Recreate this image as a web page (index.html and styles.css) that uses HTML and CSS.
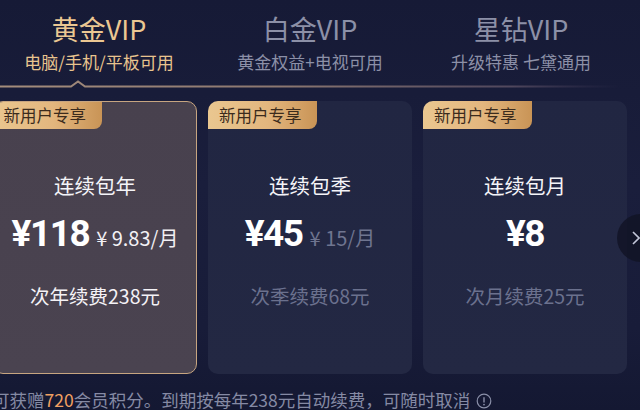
FILE: index.html
```html
<!DOCTYPE html>
<html lang="zh-CN">
<head>
<meta charset="utf-8">
<title>VIP</title>
<link rel="stylesheet" href="styles.css">
</head>
<body>
<div class="page">
  <div class="tabs">
    <div class="tab active">
      <div class="tab-title">黄金VIP</div>
      <div class="tab-sub">电脑/手机/平板可用</div>
    </div>
    <div class="tab">
      <div class="tab-title">白金VIP</div>
      <div class="tab-sub">黄金权益+电视可用</div>
    </div>
    <div class="tab">
      <div class="tab-title">星钻VIP</div>
      <div class="tab-sub">升级特惠 七黛通用</div>
    </div>
  </div>
  <svg class="divider" width="640" height="12" viewBox="0 0 640 12">
    <defs>
      <linearGradient id="lg" x1="0" x2="1" y1="0" y2="0">
        <stop offset="0" stop-color="#a48d7c"/>
        <stop offset="0.45" stop-color="#8a7670"/>
        <stop offset="0.8" stop-color="#5e5266" stop-opacity="0.8"/>
        <stop offset="0.97" stop-color="#3a3554" stop-opacity="0"/>
      </linearGradient>
    </defs>
    <path d="M0 6.5 H71 L78 1.5 L85 6.5 H640" fill="none" stroke="url(#lg)" stroke-width="2"/>
  </svg>
  <div class="cards">
    <div class="card selected">
      <div class="badge">新用户专享</div>
      <div class="card-title">连续包年</div>
      <div class="price-row">
        <span class="price">¥118</span>
        <span class="per">¥ 9.83/月</span>
      </div>
      <div class="renew">次年续费238元</div>
    </div>
    <div class="card">
      <div class="badge">新用户专享</div>
      <div class="card-title">连续包季</div>
      <div class="price-row">
        <span class="price">¥45</span>
        <span class="per">¥ 15/月</span>
      </div>
      <div class="renew">次季续费68元</div>
    </div>
    <div class="card">
      <div class="badge">新用户专享</div>
      <div class="card-title">连续包月</div>
      <div class="price-row">
        <span class="price">¥8</span>
      </div>
      <div class="renew">次月续费25元</div>
    </div>
  </div>
  <div class="note">可获赠<span class="hl">720</span>会员积分。到期按每年238元自动续费，可随时取消
    <svg class="info" width="16" height="16" viewBox="0 0 16 16"><circle cx="8" cy="8" r="6.8" fill="none" stroke="#8a8fa8" stroke-width="1.2"/><line x1="8" y1="4.2" x2="8" y2="9.4" stroke="#8a8fa8" stroke-width="1.4"/><circle cx="8" cy="11.6" r="0.9" fill="#8a8fa8"/></svg>
  </div>
  <div class="next">
    <svg width="12" height="16" viewBox="0 0 12 16"><polyline points="2,2 8,8 2,14" fill="none" stroke="#c3c7da" stroke-width="1.6"/></svg>
  </div>
</div>
</body>
</html>
```
FILE: styles.css
```css
html, body {
  margin: 0;
  padding: 0;
}
body {
  width: 640px;
  height: 410px;
  overflow: hidden;
  background: linear-gradient(180deg, #161a36 0%, #1a1e3c 45%, #181c39 80%, #141832 100%);
  font-family: "Noto Sans CJK SC", "Noto Sans", sans-serif;
  color: #fff;
}
.page {
  position: relative;
  width: 640px;
  height: 410px;
}
.tabs {
  display: grid;
  grid-template-columns: 204px 204px 204px;
  column-gap: 11px;
  margin-left: -7px;
  padding-top: 12px;
}
.tab {
  text-align: center;
  color: #8c90a7;
}
.tab-title {
  font-size: 27px;
  line-height: 34px;
  font-weight: 400;
}
.tab-sub {
  font-size: 17px;
  line-height: 22px;
  margin-top: 5px;
}
.tab.active .tab-title { color: #ebc792; }
.tab.active .tab-sub { color: #e8c48e; }
.tab:first-child { transform: translateX(4px); }
.tab:last-child { transform: translateX(-4px); }
.divider {
  display: block;
  margin-top: 7px;
}
.cards {
  display: grid;
  grid-template-columns: 204px 204px 204px;
  column-gap: 11px;
  margin-left: -7px;
  margin-top: 9px;
}
.card {
  height: 273px;
  box-sizing: border-box;
  border-radius: 10px;
  background: linear-gradient(180deg, #212642 0%, #232843 100%);
  display: flex;
  flex-direction: column;
  align-items: center;
  overflow: hidden;
}
.card.selected {
  background: linear-gradient(180deg, #48414e 0%, #4a4350 100%);
  border: 1.5px solid #c7a580;
}
.badge {
  align-self: flex-start;
  width: 109px;
  height: 28px;
  box-sizing: border-box;
  padding-left: 11px;
  font-size: 16.5px;
  line-height: 28px;
  color: #3b2b1d;
  background: linear-gradient(90deg, #eac790 0%, #e3b67e 55%, #c99456 100%);
  border-radius: 0 0 8px 0;
}
.card.selected .badge {
  margin: -1.5px 0 0 -1.5px;
}
.card-title {
  margin-top: 43px;
  font-size: 20.5px;
  line-height: 26px;
  color: #f4f4f8;
}
.price-row {
  margin-top: 13px;
  height: 46px;
  display: flex;
  align-items: baseline;
  gap: 7px;
}
.price {
  font-family: Roboto, "Noto Sans", sans-serif;
  font-size: 37px;
  line-height: 46px;
  font-weight: 700;
  letter-spacing: -1.5px;
  color: #fff;
}
.per {
  font-size: 20px;
  line-height: 26px;
  color: #6f7590;
}
.card.selected .per { color: #f2f0f4; }
.renew {
  margin-top: 26px;
  font-size: 19.5px;
  line-height: 26px;
  color: #6b718e;
}
.card.selected .renew { color: #f4f2f6; }
.note {
  margin-top: 17px;
  margin-left: -8px;
  white-space: nowrap;
  font-size: 17.5px;
  line-height: 18px;
  color: #858aa4;
}
.note .hl { color: #f0a062; }
.info {
  vertical-align: -2px;
  margin-left: 2px;
}
.next {
  position: absolute;
  left: 617px;
  top: 214px;
  width: 48px;
  height: 48px;
  border-radius: 50%;
  background: rgba(18, 20, 38, 0.85);
  display: flex;
  align-items: center;
  padding-left: 14px;
  box-sizing: border-box;
}
.next svg { display: block; }
```
